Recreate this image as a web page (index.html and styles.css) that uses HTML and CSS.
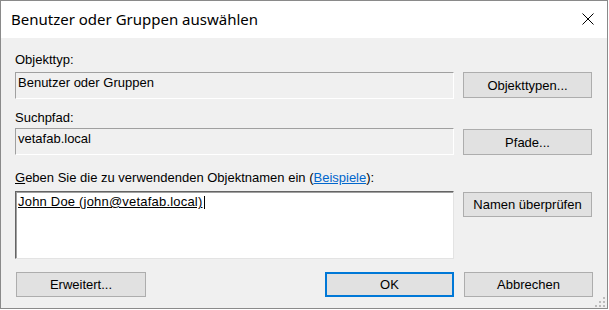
FILE: index.html
```html
<!DOCTYPE html>
<html lang="de">
<head>
  <meta charset="UTF-8">
  <title>Benutzer oder Gruppen auswählen</title>
  <link rel="stylesheet" href="styles.css">
</head>
<body>
  <div class="window">
    <div class="titlebar">
      <span class="title">Benutzer oder Gruppen auswählen</span>
      <svg class="close" width="12" height="12" viewBox="0 0 12 12">
        <path d="M0.5 0.5 L11.5 11.5 M11.5 0.5 L0.5 11.5" stroke="#000" stroke-width="1" fill="none"/>
      </svg>
    </div>

    <div class="content">
      <label class="label first">Objekttyp:</label>
      <div class="row">
        <div class="box readonly">Benutzer oder Gruppen</div>
        <button class="btn">Objekttypen...</button>
      </div>

      <label class="label second">Suchpfad:</label>
      <div class="row">
        <div class="box readonly">vetafab.local</div>
        <button class="btn btn-low">Pfade...</button>
      </div>

      <label class="label third"><u>G</u>eben Sie die zu verwendenden Objektnamen ein (<a href="#" class="link">Beispiele</a>):</label>
      <div class="row">
        <div class="box names"><span class="name">John Doe (john@vetafab.local)</span><span class="caret"></span></div>
        <button class="btn btn-check">Namen überprüfen</button>
      </div>

      <div class="footer">
        <button class="btn">Erweitert...</button>
        <div class="footer-right">
          <button class="btn btn-ok">OK</button>
          <button class="btn">Abbrechen</button>
        </div>
      </div>
    </div>

    <!-- size grip -->
    <svg class="grip" width="12" height="10" viewBox="0 0 12 10">
      <rect x="9" y="0" width="2" height="2" fill="#bcbcbc"/>
      <rect x="5" y="4" width="2" height="2" fill="#bcbcbc"/>
      <rect x="9" y="4" width="2" height="2" fill="#bcbcbc"/>
      <rect x="1" y="8" width="2" height="2" fill="#bcbcbc"/>
      <rect x="5" y="8" width="2" height="2" fill="#bcbcbc"/>
      <rect x="9" y="8" width="2" height="2" fill="#bcbcbc"/>
    </svg>
  </div>
</body>
</html>
```

FILE: styles.css
```css
body {
  margin: 0;
  background: #ffffff;
  font-family: "Liberation Sans", Arial, sans-serif;
  font-size: 13px;
  color: #000;
}

.window {
  position: relative;
  width: 606px;
  height: 307px;
  border: 1px solid #8a8a8a;
  background: #f0f0f0;
  display: flex;
  flex-direction: column;
}

.titlebar {
  height: 37px;
  background: #fff;
  display: flex;
  align-items: center;
  justify-content: space-between;
  padding: 0 13px 0 10px;
  flex-shrink: 0;
}

.title {
  font-family: "Noto Sans", "Open Sans", sans-serif;
  font-size: 15px;
  margin-top: -1px;
}

.close {
  display: block;
  margin-top: -1px;
}

.content {
  padding: 0 14px 0 14px;
  display: flex;
  flex-direction: column;
}

.label {
  display: block;
  line-height: 15px;
  height: 15px;
}

.label.first { margin-top: 14px; margin-bottom: 5px; }
.label.second { margin-top: 11px; margin-bottom: 3px; }
.label.third { margin-top: 15px; margin-bottom: 6px; }

.link {
  color: #0066cc;
  text-decoration: underline;
}

.row {
  display: flex;
  align-items: flex-start;
  gap: 9px;
}

.box {
  width: 433px;
  height: 21px;
  padding: 2px 2px;
  line-height: 15px;
  border: 1px solid;
}

.readonly {
  background: #f0f0f0;
  border-color: #a0a0a0 #ffffff #ffffff #a0a0a0;
}

.names {
  height: 62px;
  background: #fff;
  border-color: #646464 #e3e3e3 #e3e3e3 #646464;
  box-shadow: inset 1px 1px 0 #a0a0a0;
}

.name {
  text-decoration: underline;
  letter-spacing: 0.2px;
}

.caret {
  display: inline-block;
  width: 1px;
  height: 13px;
  background: #000;
  vertical-align: -3px;
  margin-left: 1px;
}

.btn {
  width: 129px;
  height: 26px;
  background: #e1e1e1;
  border: 1px solid #adadad;
  font-family: "Liberation Sans", Arial, sans-serif;
  font-size: 13px;
  color: #000;
  padding: 0;
  margin: 0;
}

.btn-low { margin-top: 1px; }
.btn-check { margin-top: 1px; height: 25px; }

.footer {
  margin-top: 13px;
  display: flex;
  justify-content: space-between;
  align-items: flex-start;
  padding-left: 1px;
}

.footer .btn {
  width: 130px;
  height: 25px;
}

.footer-right {
  display: flex;
  gap: 10px;
}

.footer-right .btn {
  width: 129px;
}

.btn-ok {
  border: 2px solid #0078d7;
}

.grip {
  position: absolute;
  right: 1px;
  bottom: 1px;
}
```
